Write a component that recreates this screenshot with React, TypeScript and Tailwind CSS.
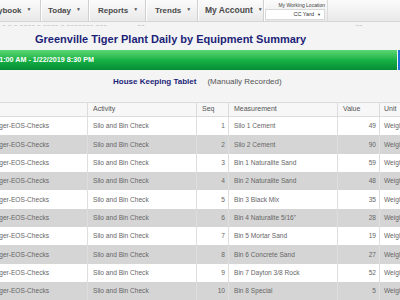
import React from "react";

const rows = [
  ["1", "Silo 1 Cement", "49"],
  ["2", "Silo 2 Cement", "90"],
  ["3", "Bin 1 Naturalite Sand", "59"],
  ["4", "Bin 2 Naturalite Sand", "48"],
  ["5", "Bin 3 Black Mix", "35"],
  ["6", "Bin 4 Naturalite 5/16\"", "28"],
  ["7", "Bin 5 Mortar Sand", "19"],
  ["8", "Bin 6 Concrete Sand", "27"],
  ["9", "Bin 7 Dayton 3/8 Rock", "52"],
  ["10", "Bin 8 Special", "5"],
];

function Sep() {
  return <div className="h-full w-[2px] border-l border-[#cfcfcf] border-r border-r-white shrink-0" />;
}

function Arrow() {
  return <span className="ml-[5px] text-[5px] text-[#555] relative top-[-1px]">▼</span>;
}

export default function App() {
  return (
    <div className="w-[400px] h-[300px] overflow-hidden bg-[#f4f4f4] font-['Liberation_Sans',Arial,sans-serif]">
      {/* nav */}
      <div className="h-[22px] flex items-stretch bg-linear-to-b from-[#fbfbfb] to-[#e9e9e9] border-b border-[#d6d6d6] text-[8px] font-bold text-[#4a4a4a]">
        <div className="w-[40px] flex items-center overflow-hidden whitespace-nowrap">
          <span className="ml-[-14px]">Playbook</span>
          <Arrow />
        </div>
        <Sep />
        <div className="w-[46px] flex items-center pl-[6px]">
          Today
          <Arrow />
        </div>
        <Sep />
        <div className="w-[55px] flex items-center pl-[8px]">
          Reports
          <Arrow />
        </div>
        <Sep />
        <div className="w-[50px] flex items-center pl-[8px]">
          Trends
          <Arrow />
        </div>
        <Sep />
        <div className="w-[64px] flex items-center pl-[6px] text-[8.5px]">
          My Account
          <Arrow />
        </div>
        <Sep />
        <div className="w-[62px] flex flex-col items-end pr-[2px] font-normal">
          <div className="text-[5px] leading-[6px] mt-[2px] text-[#444]">My Working Location</div>
          <div className="mt-[1px] w-[60px] h-[11px] bg-white border border-[#d8d8d8] flex items-center justify-end pr-[3px] text-[5.5px] text-[#333]">
            CC Yard<span className="ml-[3px] text-[4px]">▼</span>
          </div>
        </div>
        <div className="flex-1 border-l border-[#dcdcdc]" />
      </div>
      {/* faint cut text under nav */}
      <div className="h-[4px] overflow-hidden text-[7px] leading-[9px] text-[#bbb] whitespace-nowrap flex">
        <span className="ml-[2px]">a a a aaaa a aaaa a aaaaaaa aaa</span>
        <span className="ml-[30px]">aa</span>
        <span className="ml-[210px]">aa</span>
      </div>
      {/* title */}
      <div className="mt-[6px] h-[14px] pl-[35px] text-[11px] leading-[14px] font-bold text-[#1c1f78] whitespace-nowrap">
        Greenville Tiger Plant Daily by Equipment Summary
      </div>
      {/* green bar */}
      <div className="mt-[4px] h-[20px] flex">
        <div className="w-[397px] h-full bg-linear-to-b from-[#5ad674] via-[#17b346] to-[#058c36] flex items-center">
          <div className="w-[94px] flex justify-end overflow-hidden whitespace-nowrap text-[7.2px] font-bold text-white">
            <span>1/22/2019 11:00 AM - 1/22/2019 8:30 PM</span>
          </div>
        </div>
        <div className="ml-[1px] w-[2px] h-full bg-[#1a73d9]" />
      </div>
      {/* subtitle */}
      <div className="mt-[7px] h-[10px] flex items-center whitespace-nowrap text-[8px]">
        <span className="ml-[113px] font-bold text-[#1c1f78]">House Keeping Tablet</span>
        <span className="ml-[11px] text-[#555]">(Manually Recorded)</span>
      </div>
      {/* table */}
      <div className="mt-[15px] w-[420px] text-[#666]">
        <div className="grid grid-cols-[88px_109px_32px_109px_42px_40px] h-[15px] bg-[#f7f7f7] border-y border-[#dcdcdc] text-[7px] text-[#555] items-stretch">
          <div className="border-r border-[#dcdcdc]" />
          <div className="border-r border-[#dcdcdc] pl-[5px] flex items-center">Activity</div>
          <div className="border-r border-[#dcdcdc] pl-[5px] flex items-center">Seq</div>
          <div className="border-r border-[#dcdcdc] pl-[5px] flex items-center">Measurement</div>
          <div className="border-r border-[#dcdcdc] pl-[5px] flex items-center">Value</div>
          <div className="pl-[4px] flex items-center">Unit</div>
        </div>
        {rows.map((r, i) => (
          <div
            key={i}
            className={`grid grid-cols-[88px_109px_32px_109px_42px_40px] h-[18.33px] text-[6.6px] whitespace-nowrap ${
              i % 2 === 0 ? "bg-white" : "bg-[#d5d5d5]"
            }`}
          >
            <div className="border-r border-[#dedede] flex items-center overflow-hidden">
              <span className="ml-[-6px]">Tiger-EOS-Checks</span>
            </div>
            <div className="border-r border-[#dedede] pl-[5px] flex items-center">Silo and Bin Check</div>
            <div className="border-r border-[#dedede] pr-[3px] flex items-center justify-end">{r[0]}</div>
            <div className="border-r border-[#dedede] pl-[5px] flex items-center">{r[1]}</div>
            <div className="border-r border-[#dedede] pr-[3px] flex items-center justify-end">{r[2]}</div>
            <div className="pl-[4px] flex items-center">Weight</div>
          </div>
        ))}
      </div>
    </div>
  );
}
